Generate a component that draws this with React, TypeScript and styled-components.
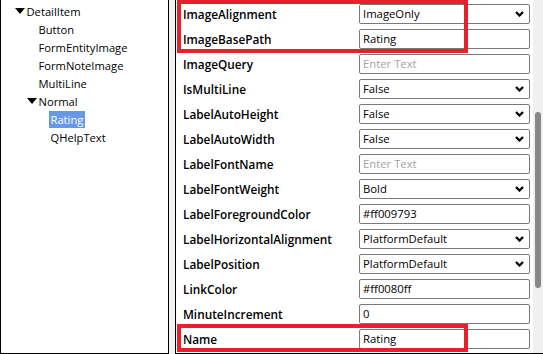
import React from "react";
import styled, { createGlobalStyle } from "styled-components";

const GlobalStyle = createGlobalStyle`
  html, body { margin: 0; padding: 0; }
  body {
    background: #f3f3f3;
    font-family: "Open Sans", "Noto Sans", "Liberation Sans", sans-serif;
    color: #000;
  }
`;

const Page = styled.div`
  display: flex;
  gap: 6px;
  width: 543px;
  height: 354px;
  overflow: hidden;
`;

const TreePanel = styled.div`
  box-sizing: border-box;
  width: 169px;
  height: 354px;
  background: #fff;
  border-left: 1px solid #000;
  border-right: 1px solid #000;
  border-bottom: 1px solid #000;
  padding-top: 2px;
`;

const TreeRow = styled.div<{ $level: number }>`
  display: flex;
  align-items: center;
  height: 18px;
  padding-left: ${(p) => 14 + p.$level * 12}px;
  font-size: 11.2px;
  white-space: nowrap;
`;

const Caret = styled.span`
  display: inline-flex;
  width: 10px;
  justify-content: flex-start;
  align-items: center;
`;

const TreeLabel = styled.span<{ $selected?: boolean }>`
  padding: 0 1.5px;
  line-height: 17px;
  background: ${(p) => (p.$selected ? "#6797ea" : "transparent")};
  color: ${(p) => (p.$selected ? "#fff" : "#000")};
`;

const PropertyPanel = styled.div`
  position: relative;
  flex: 1;
  display: flex;
  box-sizing: border-box;
  height: 354px;
  background: #fff;
  border-left: 1px solid #000;
  border-bottom: 1px solid #000;
`;

const PropertyList = styled.div`
  flex: 1;
  display: flex;
  flex-direction: column;
  padding: 1px 3px 0 7px;
`;

const PropertyRow = styled.div`
  display: grid;
  grid-template-columns: 1fr 171px;
  align-items: center;
  height: 25px;
  flex-shrink: 0;
`;

const PropLabel = styled.div`
  font-size: 11.8px;
  font-weight: 600;
  white-space: nowrap;
`;

const Field = styled.div<{ $placeholder?: boolean }>`
  box-sizing: border-box;
  height: 20px;
  border: 1px solid #7a7a7a;
  border-radius: 2px;
  background: #fff;
  display: flex;
  align-items: center;
  justify-content: space-between;
  padding: 0 5px 0 3px;
  font-size: 11.3px;
  color: ${(p) => (p.$placeholder ? "#a3a3a3" : "#000")};
  white-space: nowrap;
`;

const ScrollTrack = styled.div`
  width: 10px;
  background: #f0f0f0;
  display: flex;
  flex-direction: column;
  align-items: center;
`;

const ScrollThumb = styled.div`
  margin-top: 112px;
  width: 6px;
  height: 176px;
  border-radius: 3px;
  background: #888;
`;

const Highlight = styled.div<{ $top: number; $height: number }>`
  position: absolute;
  left: 1px;
  top: ${(p) => p.$top}px;
  width: 291px;
  height: ${(p) => p.$height}px;
  box-sizing: border-box;
  border: 4px solid #e8202c;
  pointer-events: none;
`;

const TriangleDown = () => (
  <svg width="10" height="7" viewBox="0 0 10 7">
    <polygon points="0,0 10,0 5,6" fill="#000" />
  </svg>
);

const Chevron = () => (
  <svg width="9" height="6" viewBox="0 0 9 6">
    <polyline points="1,1 4.5,4.5 8,1" fill="none" stroke="#000" strokeWidth="2.3" />
  </svg>
);

type TreeItem = { label: string; level: number; expanded?: boolean; selected?: boolean };

const tree: TreeItem[] = [
  { label: "DetailItem", level: 0, expanded: true },
  { label: "Button", level: 1 },
  { label: "FormEntityImage", level: 1 },
  { label: "FormNoteImage", level: 1 },
  { label: "MultiLine", level: 1 },
  { label: "Normal", level: 1, expanded: true },
  { label: "Rating", level: 2, selected: true },
  { label: "QHelpText", level: 2 },
];

type Prop = { name: string; value: string; kind: "select" | "text" | "placeholder" };

const props: Prop[] = [
  { name: "ImageAlignment", value: "ImageOnly", kind: "select" },
  { name: "ImageBasePath", value: "Rating", kind: "text" },
  { name: "ImageQuery", value: "Enter Text", kind: "placeholder" },
  { name: "IsMultiLine", value: "False", kind: "select" },
  { name: "LabelAutoHeight", value: "False", kind: "select" },
  { name: "LabelAutoWidth", value: "False", kind: "select" },
  { name: "LabelFontName", value: "Enter Text", kind: "placeholder" },
  { name: "LabelFontWeight", value: "Bold", kind: "select" },
  { name: "LabelForegroundColor", value: "#ff009793", kind: "text" },
  { name: "LabelHorizontalAlignment", value: "PlatformDefault", kind: "select" },
  { name: "LabelPosition", value: "PlatformDefault", kind: "select" },
  { name: "LinkColor", value: "#ff0080ff", kind: "text" },
  { name: "MinuteIncrement", value: "0", kind: "text" },
  { name: "Name", value: "Rating", kind: "text" },
];

export default function App() {
  return (
    <>
      <GlobalStyle />
      <Page>
        <TreePanel>
          {tree.map((t) => (
            <TreeRow key={t.label} $level={t.level}>
              <Caret>{t.expanded ? <TriangleDown /> : null}</Caret>
              <TreeLabel $selected={t.selected}>{t.label}</TreeLabel>
            </TreeRow>
          ))}
        </TreePanel>
        <PropertyPanel>
          <PropertyList>
            {props.map((p) => (
              <PropertyRow key={p.name}>
                <PropLabel>{p.name}</PropLabel>
                <Field $placeholder={p.kind === "placeholder"}>
                  <span>{p.value}</span>
                  {p.kind === "select" ? <Chevron /> : null}
                </Field>
              </PropertyRow>
            ))}
          </PropertyList>
          <ScrollTrack>
            <ScrollThumb />
          </ScrollTrack>
          <Highlight $top={0} $height={53} />
          <Highlight $top={324} $height={28} />
        </PropertyPanel>
      </Page>
    </>
  );
}
